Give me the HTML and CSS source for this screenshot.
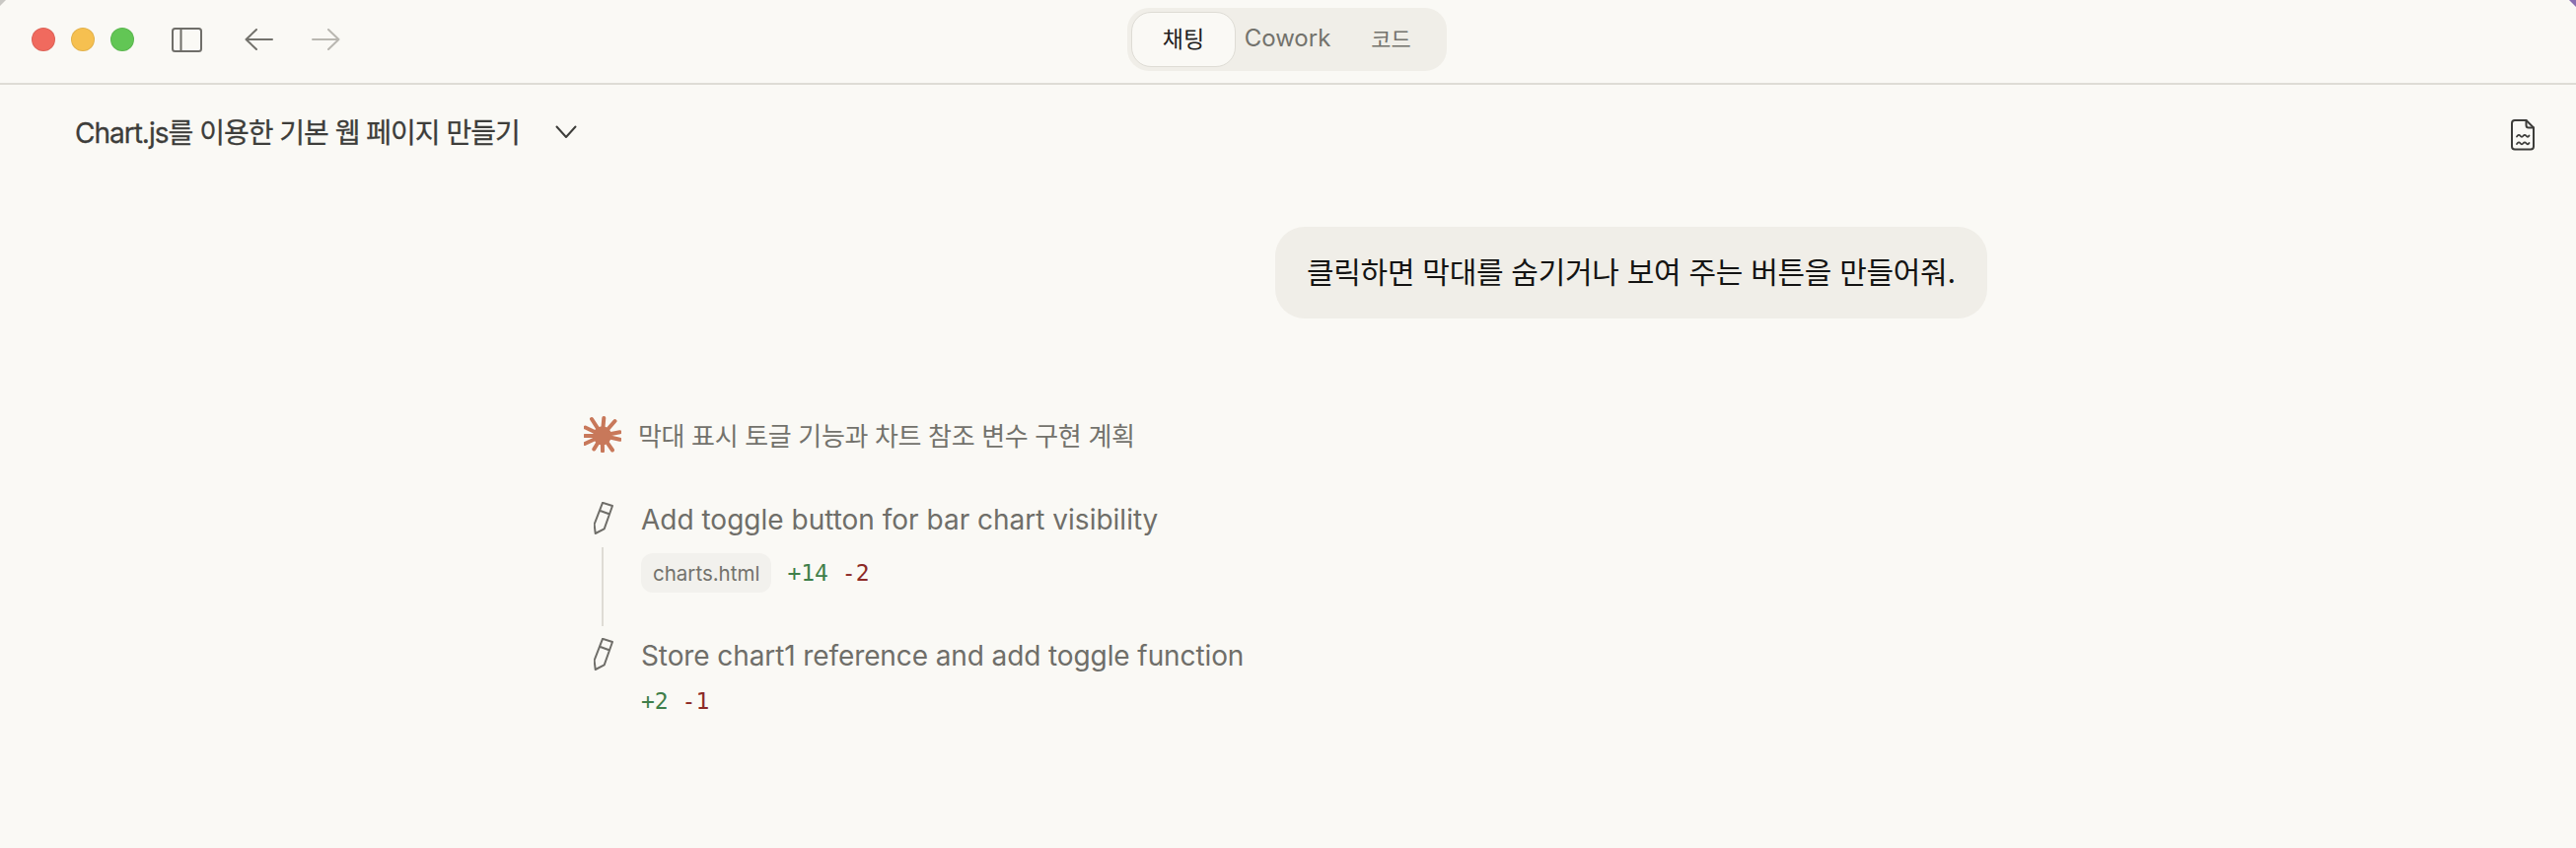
FILE: index.html
```html
<!DOCTYPE html>
<html lang="ko">
<head>
<meta charset="utf-8">
<title>Chart.js</title>
<link rel="stylesheet" href="styles.css">
</head>
<body>
<svg class="corner corner-left" viewBox="0 0 6 6" width="6" height="6"><path d="M0 0h6L0 6z"/></svg>
<svg class="corner corner-right" viewBox="0 0 7 7" width="7" height="7"><path d="M0 0h7v7z"/></svg>
<header class="titlebar">
  <div class="controls">
    <span class="light light-red"></span>
    <span class="light light-yellow"></span>
    <span class="light light-green"></span>
    <svg class="icon-sidebar" viewBox="0 0 31 25" width="31" height="25"><rect x="1" y="1" width="29" height="23" rx="2.5"/><path d="M9.5 1v23"/></svg>
    <svg class="icon-back" viewBox="0 0 29 22" width="29" height="22"><path d="M12 1 1.500 11 12 21M1.500 11H28"/></svg>
    <svg class="icon-forward" viewBox="0 0 29 22" width="29" height="22"><path d="M17 1l10.500 10L17 21M27.500 11H1"/></svg>
  </div>
  <nav class="tabs">
    <span class="tab tab-active">채팅</span>
    <span class="tab tab-latin">Cowork</span>
    <span class="tab">코드</span>
  </nav>
</header>
<main>
  <div class="convo-head">
    <h1 class="convo-title">Chart.js를 이용한 기본 웹 페이지 만들기</h1>
    <svg class="icon-chevron" viewBox="0 0 22 14" width="22" height="14"><path d="M1.500 1.500 11 12l9.500-10.500"/></svg>
    <svg class="icon-doc" viewBox="0 0 24 32" width="24" height="32"><path d="M4 1h11.500L23 8.500V27.500a3 3 0 0 1-3 3H4a3 3 0 0 1-3-3V4a3 3 0 0 1 3-3z"/><path d="M15.500 1v5a2.500 2.500 0 0 0 2.500 2.500h5"/><path class="squiggle" d="M6 17.500c1.500-2 2.500-2 3.500-.7s2 1.300 3 0 2-1.300 3 0 2 1.300 3-.3M6 25c1.500-2 2.500-2 3.500-.7s2 1.300 3 0 2-1.300 3 0 2 1.300 3-.3"/></svg>
  </div>
  <div class="thread">
    <div class="bubble">클릭하면 막대를 숨기거나 보여 주는 버튼을 만들어줘.</div>
    <div class="thinking">
      <svg class="icon-spark" viewBox="0 0 38 37" width="38" height="37"><circle cx="18.700" cy="19.700" r="7.500"/><path d="M18.700 19.700 8 3M18.700 19.700 20.300 2M18.700 19.700 31.500 5M18.700 19.700 36.500 16.300M18.700 19.700 36.500 23.700M18.700 19.700 29 34.500M18.700 19.700 19 35.500M18.700 19.700 10.300 33.500M18.700 19.700 1 28M18.700 19.700 1 20M18.700 19.700 1.500 11.500"/></svg>
      <span>막대 표시 토글 기능과 차트 참조 변수 구현 계획</span>
    </div>
    <div class="step">
      <svg class="icon-pencil" viewBox="0 0 20 33" width="20" height="33"><path d="M9 .8 19 4l-8.300 23.300-9 4.700L.6 22.700zM6 8.700l9.700 3.600"/></svg>
      <div class="step-title">Add toggle button for bar chart visibility</div>
      <div class="connector"></div>
      <div class="step-detail">
        <span class="chip">charts.html</span>
        <span class="diff"><span class="plus">+14</span> <span class="minus">-2</span></span>
      </div>
    </div>
    <div class="step step-last">
      <svg class="icon-pencil" viewBox="0 0 20 33" width="20" height="33"><path d="M9 .8 19 4l-8.300 23.300-9 4.700L.6 22.700zM6 8.700l9.700 3.600"/></svg>
      <div class="step-title">Store chart1 reference and add toggle function</div>
      <div></div>
      <div class="step-detail">
        <span class="diff"><span class="plus">+2</span> <span class="minus">-1</span></span>
      </div>
    </div>
  </div>
</main>
</body>
</html>
```

FILE: styles.css
```css
* { box-sizing: border-box; }
html, body { margin: 0; height: 100%; }
body {
  background: #faf9f5;
  font-family: Inter, "Noto Sans CJK KR", sans-serif;
  overflow: hidden;
}
svg { display: block; fill: none; stroke-linecap: round; stroke-linejoin: round; }

.corner { position: absolute; top: 0; stroke: none; }
.corner-left { left: 0; fill: #c9c8c4; }
.corner-right { right: 0; fill: #8a6fb0; }

.titlebar {
  height: 86px;
  border-bottom: 2px solid #dedcd5;
  display: flex;
  align-items: center;
  position: relative;
  padding: 0 0 4px 32px;
}
.controls { display: flex; align-items: center; }
.light { width: 24px; height: 24px; border-radius: 50%; margin-right: 16px; border: 1px solid rgba(0,0,0,.08); }
.light-red { background: #f06a5e; }
.light-yellow { background: #f6c050; }
.light-green { background: #62c655; }
.icon-sidebar { stroke: #6f6e69; stroke-width: 2; margin: 0 43px 0 22px; }
.icon-back { stroke: #73726c; stroke-width: 2; margin-right: 39px; }
.icon-forward { stroke: #b9b7b1; stroke-width: 2; }

.tabs {
  position: absolute;
  left: 1143px;
  top: 8px;
  width: 324px;
  height: 64px;
  padding: 4px;
  background: #f0eee8;
  border-radius: 22px;
  display: grid;
  grid-template-columns: 106px 105px 1fr;
  font-size: 22px;
}
.tab {
  display: flex;
  align-items: center;
  justify-content: center;
  color: #73726c;
  padding-bottom: 5px;
}
.tab-latin { font-size: 24px; padding-bottom: 3px; }
.tab-active {
  background: #faf9f5;
  color: #1f1e1d;
  border-radius: 20px;
  border: 1px solid #dedcd5;
  font-size: 23px;
}

.convo-head {
  height: 94px;
  padding: 0 42px 0 76px;
  display: flex;
  align-items: center;
}
.convo-title {
  margin: 0;
  font-size: 28px;
  font-weight: 400;
  letter-spacing: -1px;
  color: #3d3d3a;
  -webkit-text-stroke: .3px #3d3d3a;
}
.icon-chevron { stroke: #3d3d3a; stroke-width: 2; margin-left: 36px; margin-top: 1px; }
.icon-doc { stroke: #3d3d3a; stroke-width: 2; margin-left: auto; margin-top: 8px; }
.icon-doc .squiggle { stroke-width: 1.800; }

.thread {
  margin: 50px 0 0 592px;
  width: 1423px;
  display: flex;
  flex-direction: column;
}
.bubble {
  align-self: flex-end;
  height: 93px;
  width: 722px;
  padding: 0 32px 6px;
  background: #f0eee8;
  border-radius: 30px;
  display: flex;
  align-items: center;
  font-size: 30px;
  letter-spacing: -.3px;
  color: #141413;
  white-space: nowrap;
}
.thinking {
  margin-top: 98px;
  display: flex;
  align-items: center;
  gap: 17px;
  font-size: 26px;
  letter-spacing: -.35px;
  color: #73726c;
}
.thinking span { padding-top: 1px; }
.icon-spark { stroke: #c8785a; fill: #c8785a; stroke-width: 4; }

.step {
  display: grid;
  grid-template-columns: 20px 1fr;
  column-gap: 28px;
  margin-top: 50px;
  padding-left: 10px;
}
.step-last { margin-top: 12px; }
.icon-pencil { stroke: #6f6e69; stroke-width: 2; }
.step-title {
  font-size: 28px;
  line-height: 33px;
  color: #6f6e69;
  padding-top: 2px;
}
.step-last .step-title { letter-spacing: -.1px; }
.connector {
  width: 2px;
  height: 80px;
  margin: 11px 0 0 8px;
  background: #dedcd5;
}
.step-detail {
  display: flex;
  align-items: center;
  align-self: start;
  gap: 16px;
  margin-top: 17px;
}
.step-last .step-detail { margin-top: 16px; }
.chip {
  height: 40px;
  padding: 0 12px;
  display: flex;
  align-items: center;
  background: #f2f1ed;
  border-radius: 12px;
  font-size: 20.500px;
  color: #73726c;
}
.diff { font-family: "DejaVu Sans Mono", monospace; font-size: 23px; white-space: pre; }
.plus { color: #3f7f4a; }
.minus { color: #8c2a26; }
```
